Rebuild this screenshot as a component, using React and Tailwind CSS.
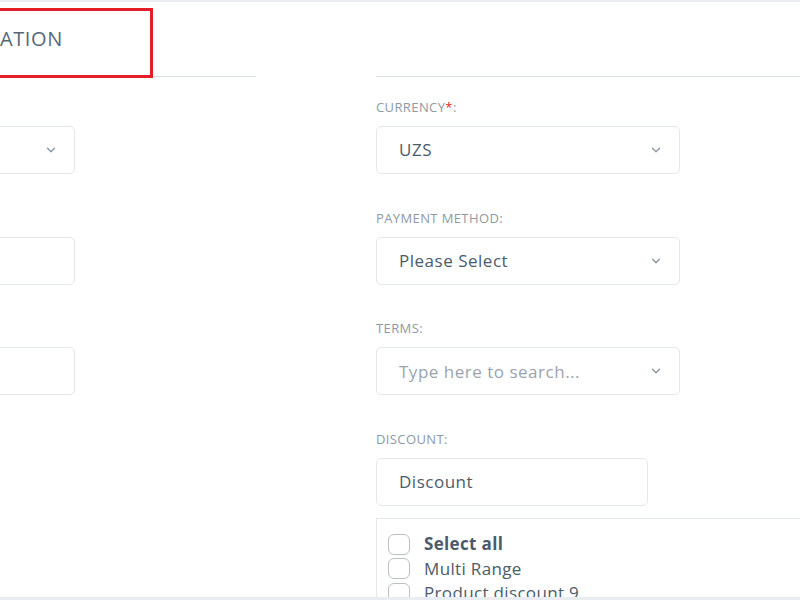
import React from 'react';
import { ChevronDown } from 'lucide-react';

const Select = ({ value, placeholder, width = 'w-[304px]' }) => (
  <div className={`${width} h-12 border border-[#e4e7ef] rounded-[5px] bg-white flex items-center justify-between pl-[22px] pr-[16px]`}>
    <span className={`text-[17px] tracking-[0.03em] ${placeholder ? 'text-[#9aa4ae]' : 'text-[#4b5b6b]'}`}>
      {value}
    </span>
    <ChevronDown size={14} strokeWidth={2.2} className="text-[#8795a3]" />
  </div>
);

const Input = ({ value, width = 'w-[304px]' }) => (
  <div className={`${width} h-12 border border-[#e4e7ef] rounded-[5px] bg-white flex items-center pl-[22px]`}>
    <span className="text-[17px] tracking-[0.03em] text-[#4b5b6b]">{value}</span>
  </div>
);

const Label = ({ children, required }) => (
  <div className="h-4 mb-[11px] text-[13px] leading-4 uppercase text-[#8d99a5] tracking-[0.03em]">
    {children}
    {required && <span className="text-[#e3262b]">*</span>}
    {children && ':'}
  </div>
);

const Check = ({ label, bold }) => (
  <div className="flex items-center h-[24.5px] gap-[14px]">
    <div className="w-[22px] h-[21px] rounded-[6px] border border-[#b9bfc6] bg-white" />
    <span className={`text-[17px] tracking-[0.02em] text-[#4b5b6b] ${bold ? 'font-bold' : ''}`}>{label}</span>
  </div>
);

const App = () => {
  return (
    <div className="w-[800px] h-[600px] overflow-hidden bg-white flex flex-col relative font-['Open_Sans',sans-serif]">
      <div className="h-[2px] bg-[#e9edf2] shrink-0" />

      <div className="flex-1 overflow-hidden">
        {/* header */}
        <div className="flex h-[75px]">
          <div className="w-[256px] border-b border-[#dcdfe4] flex items-center">
            <div className="text-[20px] tracking-[0.03em] text-[#56687a] leading-none">ATION</div>
          </div>
          <div className="ml-[120px] flex-1 border-b border-[#dcdfe4]" />
        </div>

        {/* body */}
        <div className="flex pt-[22px]">
          <div className="-ml-[229px] w-[304px] flex flex-col">
            <Label />
            <Select value="" />
            <div className="mt-[35.67px]"><Label /></div>
            <Input value="" />
            <div className="mt-[35.67px]"><Label /></div>
            <Input value="" />
          </div>

          <div className="ml-[301px] flex-1 flex flex-col">
            <Label required>Currency</Label>
            <Select value="UZS" />
            <div className="mt-[35.67px]"><Label>Payment method</Label></div>
            <Select value="Please Select" />
            <div className="mt-[35.67px]"><Label>Terms</Label></div>
            <Select value="Type here to search..." placeholder />
            <div className="mt-[35.67px]"><Label>Discount</Label></div>
            <Input value="Discount" width="w-[272px]" />
            <div className="mt-[12px] border-t border-l border-[#e4e7ef] pl-[11px] pt-[13px]">
              <Check label="Select all" bold />
              <Check label="Multi Range" />
              <Check label="Product discount 9" />
            </div>
          </div>
        </div>
      </div>

      <div className="h-[3px] bg-[#e9edf2] shrink-0" />

      <div className="absolute left-[-10px] top-[8px] w-[163px] h-[70px] border-[3px] border-[#e31e26] pointer-events-none" />
    </div>
  );
};

export default App;
